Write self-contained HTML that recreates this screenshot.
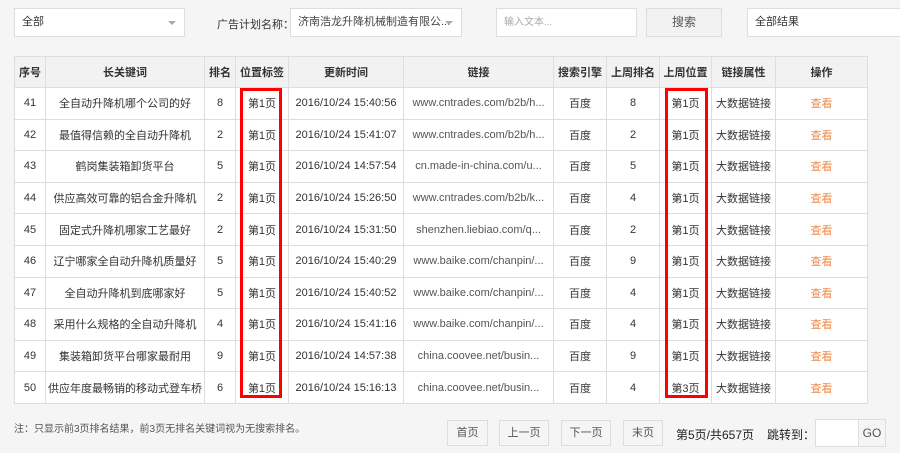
<!DOCTYPE html>
<html><head><meta charset="utf-8"><style>
*{margin:0;padding:0;box-sizing:border-box}
body{width:900px;height:453px;background:#f5f5f5;font-family:"Liberation Sans","Noto Sans CJK SC",sans-serif;font-size:11px;color:#333;position:relative;overflow:hidden}
.a{position:absolute;white-space:nowrap}
.box{background:#fff;border:1px solid #ddd;line-height:27px;padding-left:7px;overflow:hidden;white-space:nowrap}
.arr{position:absolute;right:8px;top:12px;width:0;height:0;border-left:4px solid transparent;border-right:4px solid transparent;border-top:4px solid #aaa}
table{position:absolute;left:14px;top:56px;border-collapse:collapse;table-layout:fixed;width:853px;background:#fff}
td,th{border:1px solid #ddd;text-align:center;white-space:nowrap;overflow:hidden;font-size:11px}
th{background:#f2f2f2;height:31px;font-weight:bold;color:#333}
td{height:31.6px}
td.l{color:#555}
td.v{color:#f08a4b}
.red{position:absolute;border:3px solid #f00}
.btn{position:absolute;top:420px;height:26px;border:1px solid #ddd;background:#f5f5f5;line-height:24px;text-align:center;color:#555;font-size:11px}
</style></head><body>
<div class="a box" style="left:14px;top:8px;width:171px;height:29px">全部<span class="arr"></span></div>
<div class="a" style="left:217px;top:16px;color:#333">广告计划名称：</div>
<div class="a box" style="left:290px;top:8px;width:172px;height:29px;color:#444;padding-left:7px">济南浩龙升降机械制造有限公...<span class="arr"></span></div>
<div class="a box" style="left:496px;top:8px;width:141px;height:29px;color:#aaa;font-size:10px">输入文本...</div>
<div class="a" style="left:646px;top:8px;width:76px;height:29px;border:1px solid #ddd;background:#f2f2f2;text-align:center;line-height:27px;font-size:12px;color:#555">搜索</div>
<div class="a box" style="left:747px;top:8px;width:160px;height:29px">全部结果</div>
<table>
<colgroup><col style="width:31px"><col style="width:159px"><col style="width:31px"><col style="width:53px"><col style="width:115px"><col style="width:150px"><col style="width:53px"><col style="width:53px"><col style="width:52px"><col style="width:64px"><col style="width:92px"></colgroup>
<tr><th>序号</th><th>长关键词</th><th>排名</th><th>位置标签</th><th>更新时间</th><th>链接</th><th>搜索引擎</th><th>上周排名</th><th>上周位置</th><th>链接属性</th><th>操作</th></tr>
<tr><td>41</td><td>全自动升降机哪个公司的好</td><td>8</td><td>第1页</td><td>2016/10/24 15:40:56</td><td class="l">www.cntrades.com/b2b/h...</td><td>百度</td><td>8</td><td>第1页</td><td>大数据链接</td><td class="v">查看</td></tr>
<tr><td>42</td><td>最值得信赖的全自动升降机</td><td>2</td><td>第1页</td><td>2016/10/24 15:41:07</td><td class="l">www.cntrades.com/b2b/h...</td><td>百度</td><td>2</td><td>第1页</td><td>大数据链接</td><td class="v">查看</td></tr>
<tr><td>43</td><td>鹤岗集装箱卸货平台</td><td>5</td><td>第1页</td><td>2016/10/24 14:57:54</td><td class="l">cn.made-in-china.com/u...</td><td>百度</td><td>5</td><td>第1页</td><td>大数据链接</td><td class="v">查看</td></tr>
<tr><td>44</td><td>供应高效可靠的铝合金升降机</td><td>2</td><td>第1页</td><td>2016/10/24 15:26:50</td><td class="l">www.cntrades.com/b2b/k...</td><td>百度</td><td>4</td><td>第1页</td><td>大数据链接</td><td class="v">查看</td></tr>
<tr><td>45</td><td>固定式升降机哪家工艺最好</td><td>2</td><td>第1页</td><td>2016/10/24 15:31:50</td><td class="l">shenzhen.liebiao.com/q...</td><td>百度</td><td>2</td><td>第1页</td><td>大数据链接</td><td class="v">查看</td></tr>
<tr><td>46</td><td>辽宁哪家全自动升降机质量好</td><td>5</td><td>第1页</td><td>2016/10/24 15:40:29</td><td class="l">www.baike.com/chanpin/...</td><td>百度</td><td>9</td><td>第1页</td><td>大数据链接</td><td class="v">查看</td></tr>
<tr><td>47</td><td>全自动升降机到底哪家好</td><td>5</td><td>第1页</td><td>2016/10/24 15:40:52</td><td class="l">www.baike.com/chanpin/...</td><td>百度</td><td>4</td><td>第1页</td><td>大数据链接</td><td class="v">查看</td></tr>
<tr><td>48</td><td>采用什么规格的全自动升降机</td><td>4</td><td>第1页</td><td>2016/10/24 15:41:16</td><td class="l">www.baike.com/chanpin/...</td><td>百度</td><td>4</td><td>第1页</td><td>大数据链接</td><td class="v">查看</td></tr>
<tr><td>49</td><td>集装箱卸货平台哪家最耐用</td><td>9</td><td>第1页</td><td>2016/10/24 14:57:38</td><td class="l">china.coovee.net/busin...</td><td>百度</td><td>9</td><td>第1页</td><td>大数据链接</td><td class="v">查看</td></tr>
<tr><td>50</td><td>供应年度最畅销的移动式登车桥</td><td>6</td><td>第1页</td><td>2016/10/24 15:16:13</td><td class="l">china.coovee.net/busin...</td><td>百度</td><td>4</td><td>第3页</td><td>大数据链接</td><td class="v">查看</td></tr>
</table>
<div class="red" style="left:240px;top:88px;width:42px;height:310px"></div>
<div class="red" style="left:665px;top:88px;width:43px;height:310px"></div>
<div class="a" style="left:14px;top:420px;font-size:10px;color:#555">注：只显示前3页排名结果，前3页无排名关键词视为无搜索排名。</div>
<div class="btn" style="left:447px;width:41px">首页</div>
<div class="btn" style="left:499px;width:50px">上一页</div>
<div class="btn" style="left:561px;width:50px">下一页</div>
<div class="btn" style="left:623px;width:40px">末页</div>
<div class="a" style="left:676px;top:426px;font-size:12px;color:#222">第5页/共657页</div>
<div class="a" style="left:767px;top:426px;font-size:12px;color:#222">跳转到：</div>
<div class="a" style="left:815px;top:419px;width:44px;height:28px;background:#fff;border:1px solid #ddd"></div>
<div class="a" style="left:858px;top:419px;width:28px;height:28px;border:1px solid #ddd;background:#f5f5f5;text-align:center;line-height:26px;font-size:12px;color:#555">GO</div>
</body></html>
